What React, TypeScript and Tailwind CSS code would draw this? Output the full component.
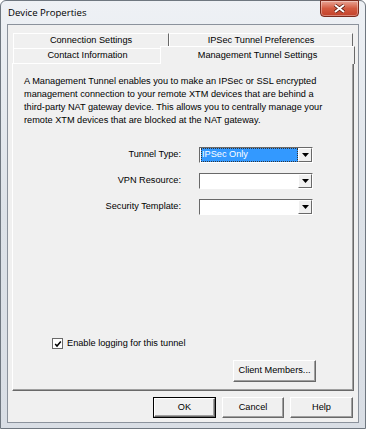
import React from "react";

const ui = "font-['Liberation_Sans',Arial,sans-serif] text-[9.2px] text-black";

function Tab({ label, className = "" }: { label: string; className?: string }) {
  return (
    <div
      className={`flex items-center justify-center whitespace-nowrap border-t border-l border-t-white border-l-white border-r border-r-[#696969] bg-[#f0f0f0] ${className}`}
    >
      {label}
    </div>
  );
}

function Select({ value, selected }: { value?: string; selected?: boolean }) {
  return (
    <div className="flex h-[16px] w-[114px] border border-t-[#696969] border-l-[#696969] border-r-white border-b-white bg-white">
      <div className="flex flex-1 items-center pl-[1px]">
        {selected ? (
          <span className="flex h-full w-full items-center bg-[#3399ff] px-[1px] text-white outline-1 outline-dotted outline-[#333] -outline-offset-1">
            {value}
          </span>
        ) : null}
      </div>
      <div className="flex w-[14px] items-center justify-center border border-t-white border-l-white border-r-[#696969] border-b-[#696969] bg-[#f0f0f0]">
        <svg width="7" height="4" viewBox="0 0 7 4">
          <path d="M0 0h7L3.5 4z" fill="#000" />
        </svg>
      </div>
    </div>
  );
}

function Button({ label, isDefault, className = "" }: { label: string; isDefault?: boolean; className?: string }) {
  return (
    <div className={`${isDefault ? "border border-black" : ""} ${className}`}>
      <div className="flex h-full w-full items-center justify-center border border-t-white border-l-white border-r-[#696969] border-b-[#696969] bg-[#f0f0f0] shadow-[inset_-1px_-1px_0_#a0a0a0]">
        {label}
      </div>
    </div>
  );
}

export default function App() {
  return (
    <div className={`${ui} flex h-[429px] w-[366px] flex-col rounded-t-[6px] border border-[#6f7780] bg-gradient-to-b from-[#eef1f5] via-[#dde2e8] to-[#d9dee5]`}>
      <div className="relative flex h-[23px] shrink-0 items-center pl-[7px] pt-[2px]">
        <span className="font-['Open_Sans',sans-serif] text-[9.6px] text-black">Device Properties</span>
        <div className="absolute right-[6px] top-[-1px] flex h-[17px] w-[39px] items-center justify-center rounded-b-[4px] border border-[#7a2a1d] bg-gradient-to-b from-[#e8a394] via-[#d35a40] to-[#c2412a] shadow-[inset_0_0_0_1px_rgba(255,255,255,0.35)]">
          <svg width="11" height="9" viewBox="0 0 11 9">
            <path d="M1 1l9 7M10 1L1 8" stroke="#5a1a10" strokeWidth="3.4" />
            <path d="M1 1l9 7M10 1L1 8" stroke="#fff" strokeWidth="2" />
          </svg>
        </div>
      </div>
      <div className="mx-[6px] mb-[5px] flex flex-1 flex-col border border-[#8b929c] bg-[#f0f0f0] px-[4px] pb-[4px]">
        <div className="mt-[8px] flex h-[15px] px-[1px]">
          <Tab label="Connection Settings" className="w-[156px]" />
          <Tab label="IPSec Tunnel Preferences" className="flex-1" />
        </div>
        <div className="relative z-10 flex h-[15px] px-[1px]">
          <Tab label="Contact Information" className="w-[149px]" />
          <Tab
            label="Management Tunnel Settings"
            className="-mx-[2px] -mt-[2px] mb-[-1px] h-[18px] flex-1 items-start pt-[2px]"
          />
        </div>
        <div className="flex flex-1 flex-col border border-t-white border-l-white border-r-[#696969] border-b-[#696969] shadow-[inset_-1px_-1px_0_#a0a0a0]">
          <p className="ml-[11px] mt-[11px] w-[300px] leading-[13px]">
            A Management Tunnel enables you to make an IPSec or SSL encrypted management connection to your remote XTM
            devices that are behind a third-party NAT gateway device. This allows you to centrally manage your remote
            XTM devices that are blocked at the NAT gateway.
          </p>
          <div className="ml-[88px] mt-[20px] grid grid-cols-[80px_114px] items-center gap-x-[18px] gap-y-[10px]">
            <span className="whitespace-nowrap text-right">Tunnel Type:</span>
            <Select value="IPSec Only" selected />
            <span className="whitespace-nowrap text-right">VPN Resource:</span>
            <Select />
            <span className="whitespace-nowrap text-right">Security Template:</span>
            <Select />
          </div>
          <div className="ml-[39px] mt-[122px] flex items-center">
            <div className="flex h-[11px] w-[11px] items-center justify-center border border-[#696969] bg-white">
              <svg width="8" height="8" viewBox="0 0 8 8">
                <path d="M1.2 4l1.8 2L6.8 1.5" stroke="#000" strokeWidth="1.5" fill="none" />
              </svg>
            </div>
            <span className="ml-[4px]">Enable logging for this tunnel</span>
          </div>
          <div className="mt-[9px] flex justify-end pr-[37px]">
            <Button label="Client Members..." className="h-[22px] w-[83px]" />
          </div>
        </div>
        <div className="mt-[6px] flex justify-end gap-[6px] pr-[1px]">
          <Button label="OK" isDefault className="h-[21px] w-[63px]" />
          <Button label="Cancel" className="h-[21px] w-[62px]" />
          <Button label="Help" className="h-[21px] w-[63px]" />
        </div>
      </div>
    </div>
  );
}
